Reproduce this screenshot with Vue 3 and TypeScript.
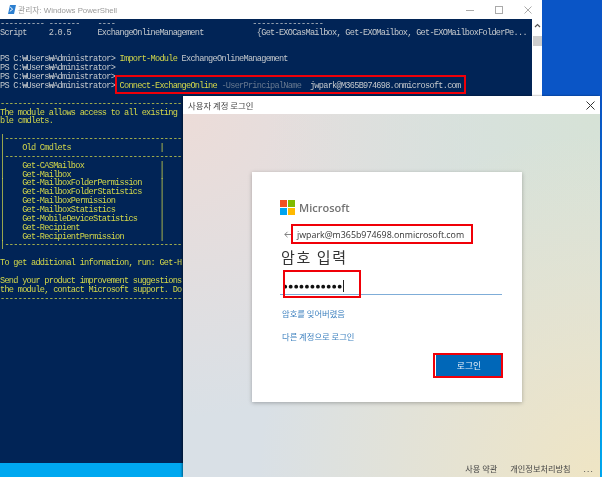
<script setup lang="ts">
type Seg = { t: string; c?: string }
const g = 'g', y = 'y', d = 'd'
const rows: Seg[][] = [
  [{ t: '---------- -------    ----               ' + ' '.repeat(16) + '----------------', c: g }],
  [{ t: 'Script     2.0.5      ExchangeOnlineManagement            {Get-EXOCasMailbox, Get-EXOMailbox, Get-EXOMailboxFolderPe...', c: g }],
  [],
  [],
  [{ t: 'PS C:₩Users₩Administrator> ', c: g }, { t: 'Import-Module', c: y }, { t: ' ExchangeOnlineManagement', c: g }],
  [{ t: 'PS C:₩Users₩Administrator>', c: g }],
  [{ t: 'PS C:₩Users₩Administrator>', c: g }],
  [{ t: 'PS C:₩Users₩Administrator> ', c: g }, { t: 'Connect-ExchangeOnline', c: y }, { t: ' -UserPrincipalName', c: d }, { t: '  jwpark@M365B974698.onmicrosoft.com', c: g }],
  [],
  [{ t: '-'.repeat(41), c: y }],
  [{ t: 'The module allows access to all existing', c: y }],
  [{ t: 'ble cmdlets.', c: y }],
  [],
  [{ t: '|' + '-'.repeat(40), c: y }],
  [{ t: '|    Old Cmdlets                    |', c: y }],
  [{ t: '|' + '-'.repeat(40), c: y }],
  ...[
    'Get-CASMailbox',
    'Get-Mailbox',
    'Get-MailboxFolderPermission',
    'Get-MailboxFolderStatistics',
    'Get-MailboxPermission',
    'Get-MailboxStatistics',
    'Get-MobileDeviceStatistics',
    'Get-Recipient',
    'Get-RecipientPermission'
  ].map((n) => [{ t: ('|    ' + n).padEnd(36, ' ') + '|', c: y }]),
  [{ t: '|' + '-'.repeat(40), c: y }],
  [],
  [{ t: 'To get additional information, run: Get-H', c: y }],
  [],
  [{ t: 'Send your product improvement suggestions', c: y }],
  [{ t: 'the module, contact Microsoft support. Do', c: y }],
  [{ t: '-'.repeat(41), c: y }]
]
</script>

<template>
  <div class="desktop">
    <section class="ps">
      <header class="ps-title">
        <svg class="ps-icon" width="8" height="9" viewBox="0 0 8 9">
          <path d="M2 0H8L6 9H0Z" fill="#2c7fd0" />
          <path d="M2.2 2L4.6 4.2L1.8 6.4" fill="none" stroke="#fff" stroke-width="1" />
        </svg>
        <span class="ps-name">관리자: Windows PowerShell</span>
        <div class="ps-controls">
          <svg width="8" height="8" viewBox="0 0 8 8"><path d="M0 4.5H8" stroke="#aaa" /></svg>
          <svg width="8" height="8" viewBox="0 0 8 8"><rect x=".5" y=".5" width="7" height="7" fill="none" stroke="#aaa" /></svg>
          <svg width="8" height="8" viewBox="0 0 8 8"><path d="M.5 .5L7.5 7.5M7.5 .5L.5 7.5" stroke="#aaa" /></svg>
        </div>
      </header>
      <div class="ps-body">
        <div class="console">
          <div v-for="(row, i) in rows" :key="i" class="line">
            <span v-for="(s, j) in row" :key="j" :class="s.c">{{ s.t }}</span>
          </div>
        </div>
        <div class="scrollbar">
          <svg width="7" height="5" viewBox="0 0 7 5"><path d="M1 4L3.5 1.5L6 4" fill="none" stroke="#555" stroke-width="1.2" /></svg>
          <div class="thumb"></div>
        </div>
      </div>
    </section>

    <section class="dialog">
      <header class="dlg-title">
        <span>사용자 계정 로그인</span>
        <svg width="9" height="9" viewBox="0 0 9 9"><path d="M.5 .5L8.5 8.5M8.5 .5L.5 8.5" stroke="#333" /></svg>
      </header>
      <div class="dlg-body">
        <div class="card">
          <div class="logo">
            <svg width="15" height="15" viewBox="0 0 15 15">
              <rect width="7" height="7" fill="#f25022" />
              <rect x="8" width="7" height="7" fill="#7fba00" />
              <rect y="8" width="7" height="7" fill="#00a4ef" />
              <rect x="8" y="8" width="7" height="7" fill="#ffb900" />
            </svg>
            <span>Microsoft</span>
          </div>
          <div class="identity">
            <svg width="7" height="7" viewBox="0 0 7 7"><path d="M3.5 .8L.8 3.5L3.5 6.2M.8 3.5H7" fill="none" stroke="#777" stroke-width=".9" /></svg>
            <span>jwpark@m365b974698.onmicrosoft.com</span>
          </div>
          <h1>암호 입력</h1>
          <div class="field"><span class="dots">●●●●●●●●●●●</span><i class="caret"></i></div>
          <a class="link first">암호를 잊어버렸음</a>
          <a class="link second">다른 계정으로 로그인</a>
          <div class="actions"><button type="button">로그인</button></div>
        </div>
        <footer class="dlg-foot">
          <span>사용 약관</span>
          <span>개인정보처리방침</span>
          <span class="more">...</span>
        </footer>
      </div>
    </section>

    <div class="mark m1"></div>
    <div class="mark m2"></div>
    <div class="mark m3"></div>
    <div class="mark m4"></div>
  </div>
</template>

<style>
html, body { margin: 0; padding: 0; overflow: hidden; }
</style>

<style scoped>
.desktop {
  position: relative;
  width: 602px;
  height: 477px;
  overflow: hidden;
  background: linear-gradient(180deg, #0a55c6 0, #0a55c6 100px, #00a8f0 460px);
  font-family: "Noto Sans CJK KR", "Noto Sans", sans-serif;
  filter: blur(0.35px);
}
.ps {
  display: flex;
  flex-direction: column;
  width: 542px;
  height: 463px;
}
.ps-title {
  flex: none;
  height: 19px;
  display: flex;
  align-items: center;
  background: #fff;
  padding-left: 8px;
  box-sizing: border-box;
}
.ps-icon { margin-right: 2px; }
.ps-name {
  font-family: "Liberation Sans", "Noto Sans CJK KR", sans-serif;
  font-size: 7.8px;
  color: #9a9a9a;
  white-space: nowrap;
}
.ps-controls {
  margin-left: auto;
  margin-right: 10px;
  display: flex;
  gap: 21px;
}
.ps-body { flex: 1; display: flex; min-height: 0; }
.console {
  flex: 1;
  min-width: 0;
  overflow: hidden;
  background: #012456;
  padding-top: 1px;
  font-family: "Liberation Mono", "Noto Sans CJK KR", monospace;
  font-size: 8.6px;
  letter-spacing: -0.73px;
  line-height: 8.87px;
}
.line { height: 8.87px; white-space: pre; }
.g { color: #c4c8cc; }
.y { color: #d4d84a; }
.d { color: #67788f; }
.scrollbar {
  flex: none;
  width: 10px;
  background: #fff;
  display: flex;
  flex-direction: column;
  align-items: center;
  padding-top: 4px;
  box-sizing: border-box;
}
.thumb { width: 9px; height: 10px; background: #cdcdcd; margin-top: 8px; }
.dialog {
  position: absolute;
  left: 183px;
  top: 96px;
  width: 417px;
  height: 381px;
  display: flex;
  flex-direction: column;
  background: #fff;
  box-shadow: -1px 0 2px rgba(0, 0, 0, .45);
}
.dlg-title {
  flex: none;
  height: 18px;
  display: flex;
  align-items: center;
  justify-content: space-between;
  padding: 0 5px 0 5px;
  font-size: 8.4px;
  color: #444;
}
.dlg-body {
  flex: 1;
  display: flex;
  flex-direction: column;
  min-height: 0;
  padding: 58px 0 0 69px;
  box-sizing: border-box;
  background:
    radial-gradient(circle at 100% 100%, #efe5c4 0, rgba(239, 229, 196, 0) 62%),
    radial-gradient(circle at 100% 0, #d6e2d6 0, rgba(214, 226, 214, 0) 60%),
    radial-gradient(circle at 0 0, #ecdcd8 0, rgba(236, 220, 216, 0) 55%),
    #d9e0e6;
}
.card {
  width: 270px;
  height: 230px;
  box-sizing: border-box;
  background: #fff;
  box-shadow: 0 1px 4px rgba(0, 0, 0, .28);
  padding: 28px 20px 0 28px;
  display: flex;
  flex-direction: column;
}
.logo { display: flex; align-items: center; gap: 4px; height: 15px; }
.logo span {
  font-family: "Open Sans", sans-serif;
  font-weight: 600;
  font-size: 11px;
  color: #737373;
  line-height: 15px;
}
.identity {
  display: flex;
  align-items: center;
  gap: 6px;
  margin-top: 11px;
  padding-left: 4px;
  height: 17px;
  font-family: "Open Sans", sans-serif;
  font-size: 8.85px;
  color: #333;
  white-space: nowrap;
}
h1 {
  margin: 3px 0 0 1px;
  font-size: 15px;
  font-weight: 400;
  line-height: 22px;
  letter-spacing: 1.6px;
  color: #333;
}
.field {
  margin-top: 5px;
  height: 22px;
  display: flex;
  align-items: center;
  border-bottom: 1px solid #7fadd8;
  padding: 4px 0 0 3px;
  box-sizing: border-box;
}
.dots {
  font-family: "DejaVu Sans", sans-serif;
  font-size: 5px;
  letter-spacing: 1.08px;
  color: #111;
  line-height: 10px;
}
.caret { display: block; width: 1px; height: 12px; background: #222; margin-left: 0; }
.link { font-size: 8.3px; color: #3d80bf; line-height: 13px; display: block; margin-left: 2px; }
.first { margin-top: 12px; }
.second { margin-top: 10px; }
.actions { display: flex; justify-content: flex-end; margin-top: 12px; }
button {
  width: 66px;
  height: 21px;
  margin-right: 0;
  border: 0;
  padding: 0;
  background: #0067b8;
  color: #e8f0f8;
  font-family: inherit;
  font-size: 8.8px;
}
.dlg-foot {
  margin-top: auto;
  margin-left: -69px;
  height: 18px;
  display: flex;
  justify-content: flex-end;
  align-items: center;
  gap: 13px;
  padding-right: 6px;
  font-size: 8.2px;
  color: #444;
}
.more { letter-spacing: 1.2px; margin-left: 0; }
.mark { position: absolute; border: 2.5px solid #f00008; box-sizing: border-box; }
.m1 { left: 115px; top: 75px; width: 351px; height: 19px; }
.m2 { left: 291px; top: 224px; width: 182px; height: 20px; }
.m3 { left: 283px; top: 270px; width: 78px; height: 28px; }
.m4 { left: 433px; top: 353px; width: 70px; height: 25px; }
</style>
